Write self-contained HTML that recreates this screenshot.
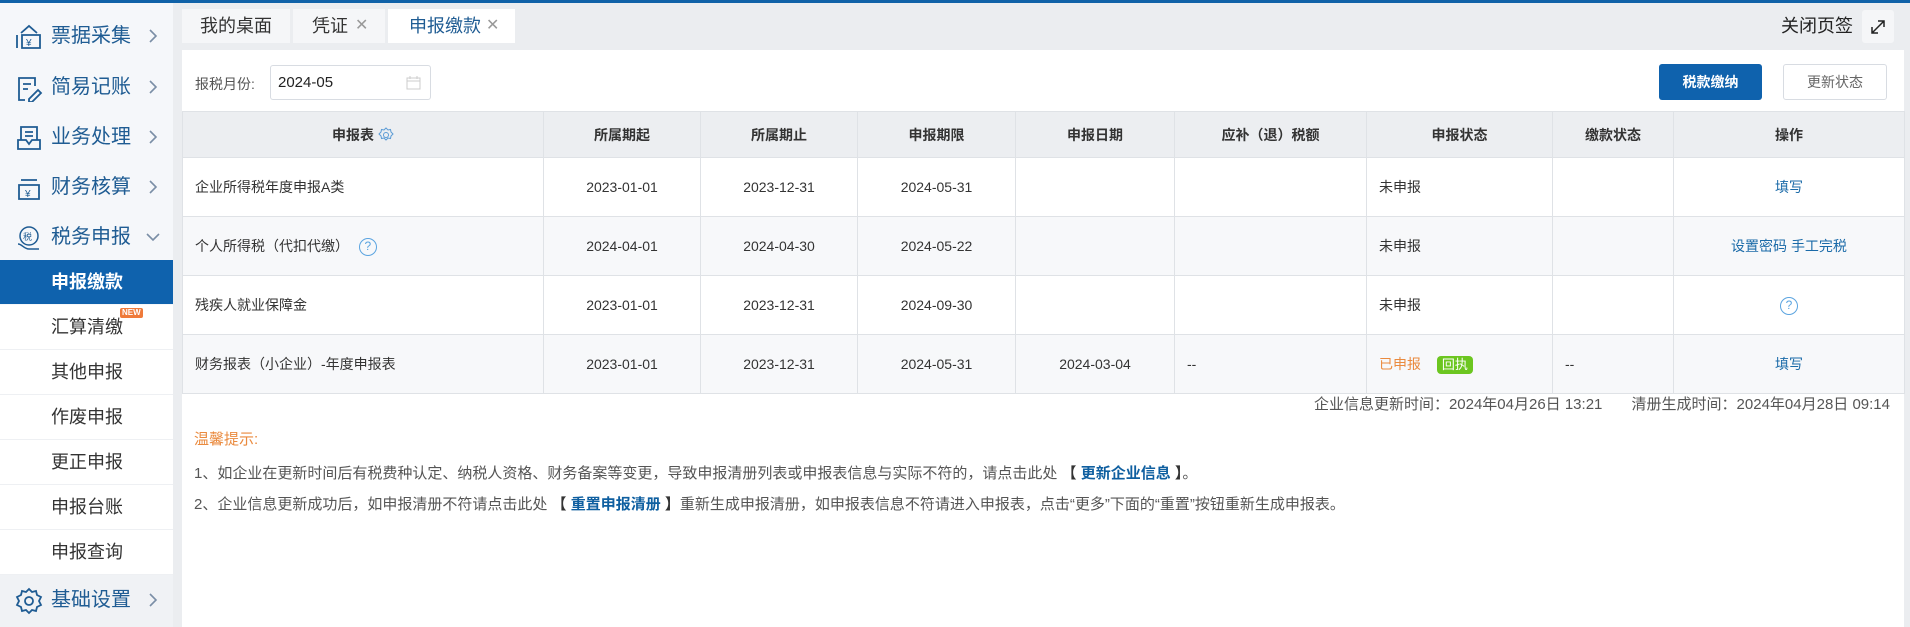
<!DOCTYPE html>
<html><head><meta charset="utf-8">
<style>
*{margin:0;padding:0;box-sizing:border-box}
body{width:1910px;height:627px;overflow:hidden;background:#ebedf0;font-family:"Liberation Sans","Noto Sans CJK SC",sans-serif;position:relative;color:#333}
.topbar{position:absolute;left:0;top:0;width:1910px;height:3px;background:#1062a8}
.side{position:absolute;left:0;top:3px;width:173px;height:624px;background:#f5f7fa}
.mi{position:absolute;left:0;width:173px;height:50px;color:#1f5c93;font-size:20px;line-height:50px}
.mi .t{position:absolute;left:51px}
.mi svg.ic{position:absolute;left:15px;top:12px}
.mi .ch{position:absolute;left:148px;top:17px}
.sub{position:absolute;left:0;width:173px;height:45px;background:#fff;font-size:18px;line-height:45px;color:#333;border-bottom:1px solid #eef0f3}
.sub .t{position:absolute;left:51px}
.sub.act{background:#0f62ad;color:#fff;font-weight:bold;border:none}
.tab{position:absolute;top:9px;height:34px;background:#f5f6f8;font-size:18px;line-height:34px;color:#333}
.panel{position:absolute;left:182px;top:50px;width:1722px;height:577px;background:#fff}
table{position:absolute;left:182px;top:111px;border-collapse:collapse;font-size:14px}
td,th{border:1px solid #dfe2e6;height:59px;text-align:center;color:#333;font-weight:normal}
th{height:46px;background:#eceef1;font-weight:bold;color:#333}
tr.g td{background:#f7f8fa}
td.l{text-align:left;padding-left:12px}
a{color:#1a6aa8;text-decoration:none}
.note{position:absolute;left:194px;font-size:15px;color:#555;white-space:nowrap}
</style></head><body>
<div class="topbar"></div>
<div class="side">
 <div class="mi" style="top:8px"><svg class="ic" width="28" height="28" viewBox="0 0 28 28" fill="none" stroke="#1f5c93" stroke-width="1.8"><path d="M2 12v13M6 10l8-7 8 7M7 12h18v13H7z"/><text x="11" y="23" font-size="10" fill="#1f5c93" stroke="none">¥</text></svg><span class="t">票据采集</span><svg class="ch" width="10" height="16" viewBox="0 0 10 16"><path d="M2 2l6 6-6 6" stroke="#7a8ea6" stroke-width="1.6" fill="none"/></svg></div>
 <div class="mi" style="top:59px"><svg class="ic" width="28" height="28" viewBox="0 0 28 28" fill="none" stroke="#1f5c93" stroke-width="1.8"><path d="M20 12V4H4v22h6M8 10h8M8 15h5M14 25l9-9 3 3-9 9h-3z"/></svg><span class="t">简易记账</span><svg class="ch" width="10" height="16" viewBox="0 0 10 16"><path d="M2 2l6 6-6 6" stroke="#7a8ea6" stroke-width="1.6" fill="none"/></svg></div>
 <div class="mi" style="top:109px"><svg class="ic" width="28" height="28" viewBox="0 0 28 28" fill="none" stroke="#1f5c93" stroke-width="1.8"><path d="M6 16V3h16v13M10 8h8M10 12h8M3 16h8l3 4 3-4h8v9H3z"/></svg><span class="t">业务处理</span><svg class="ch" width="10" height="16" viewBox="0 0 10 16"><path d="M2 2l6 6-6 6" stroke="#7a8ea6" stroke-width="1.6" fill="none"/></svg></div>
 <div class="mi" style="top:159px"><svg class="ic" width="28" height="28" viewBox="0 0 28 28" fill="none" stroke="#1f5c93" stroke-width="1.8"><path d="M6 6h16M4 11h20v14H4z"/><text x="10" y="23" font-size="10" fill="#1f5c93" stroke="none">¥</text></svg><span class="t">财务核算</span><svg class="ch" width="10" height="16" viewBox="0 0 10 16"><path d="M2 2l6 6-6 6" stroke="#7a8ea6" stroke-width="1.6" fill="none"/></svg></div>
 <div class="mi" style="top:209px"><svg class="ic" width="28" height="28" viewBox="0 0 28 28" fill="none" stroke="#1f5c93" stroke-width="1.5"><circle cx="14" cy="12" r="9"/><path d="M3 20c4 0 6 5 11 5h10"/><text x="8" y="16" font-size="9" fill="#1f5c93" stroke="none">税</text></svg><span class="t">税务申报</span><svg class="ch" width="16" height="12" viewBox="0 0 16 12" style="left:145px;top:20px"><path d="M2 2l6 6 6-6" stroke="#7a8ea6" stroke-width="1.6" fill="none"/></svg></div>
 <div class="sub act" style="top:257px;height:44px"><span class="t">申报缴款</span></div>
 <div class="sub" style="top:302px"><span class="t">汇算清缴</span><span style="position:absolute;left:120px;top:3px;background:#ef7a3a;color:#fff;font-size:8px;line-height:10px;padding:0 2px;border-radius:2px;font-weight:bold">NEW</span></div>
 <div class="sub" style="top:347px"><span class="t">其他申报</span></div>
 <div class="sub" style="top:392px"><span class="t">作废申报</span></div>
 <div class="sub" style="top:437px"><span class="t">更正申报</span></div>
 <div class="sub" style="top:482px"><span class="t">申报台账</span></div>
 <div class="sub" style="top:527px"><span class="t">申报查询</span></div>
 <div class="mi" style="top:572px;height:52px;background:#f0f2f5"><svg class="ic" width="28" height="28" viewBox="0 0 28 28" fill="none" stroke="#1f5c93" stroke-width="1.8"><circle cx="14" cy="14" r="4"/><path d="M14 2l3 3 4-1 1 4 4 2-2 4 2 4-4 2-1 4-4-1-3 3-3-3-4 1-1-4-4-2 2-4-2-4 4-2 1-4 4 1z"/></svg><span class="t">基础设置</span><svg class="ch" width="10" height="16" viewBox="0 0 10 16"><path d="M2 2l6 6-6 6" stroke="#7a8ea6" stroke-width="1.6" fill="none"/></svg></div>
</div>
<div class="tab" style="left:182px;width:108px"><span style="position:absolute;left:18px">我的桌面</span></div>
<div class="tab" style="left:293px;width:92px"><span style="position:absolute;left:19px">凭证</span><span style="position:absolute;left:62px;color:#999;font-size:16px">✕</span></div>
<div class="tab" style="left:388px;width:127px;background:#fff;color:#1f5c93"><span style="position:absolute;left:21px">申报缴款</span><span style="position:absolute;left:98px;color:#999;font-size:16px">✕</span></div>
<div style="position:absolute;left:1781px;top:9px;font-size:18px;line-height:34px;color:#222">关闭页签</div>
<div style="position:absolute;left:1862px;top:10px;width:32px;height:33px;background:#f5f6f8;border-radius:3px"><svg width="32" height="33" viewBox="0 0 32 33"><path d="M10 23l12-12M16 11h6v6M10 17v6h6" stroke="#222" stroke-width="1.5" fill="none"/></svg></div>
<div class="panel"></div>
<div style="position:absolute;left:195px;top:74px;font-size:14px;color:#555">报税月份:</div>
<div style="position:absolute;left:270px;top:65px;width:161px;height:35px;border:1px solid #d8dce2;border-radius:3px;font-size:15px;line-height:33px;padding-left:7px;color:#222">2024-05<svg style="position:absolute;right:9px;top:9px" width="15" height="15" viewBox="0 0 15 15"><path d="M1 3h13v11H1zM1 6h13M4 1v3M11 1v3" stroke="#ccc" fill="none"/></svg></div>
<div style="position:absolute;left:1659px;top:64px;width:103px;height:36px;background:#0f62ad;border-radius:3px;color:#fff;font-size:14px;font-weight:bold;line-height:36px;text-align:center">税款缴纳</div>
<div style="position:absolute;left:1783px;top:64px;width:104px;height:36px;border:1px solid #d8dce2;border-radius:3px;color:#666;font-size:14px;line-height:34px;text-align:center">更新状态</div>
<table>
<tr><th style="width:361px">申报表 <svg width="16" height="16" viewBox="0 0 16 16" style="vertical-align:-3px"><circle cx="8" cy="8" r="2.5" stroke="#5b9bd5" fill="none"/><path d="M8 1l2 2 2.5-.5.5 2.5 2 2-2 2-.5 2.5-2.5-.5-2 2-2-2-2.5.5-.5-2.5-2-2 2-2 .5-2.5 2.5.5z" stroke="#5b9bd5" fill="none"/></svg></th><th style="width:157px">所属期起</th><th style="width:157px">所属期止</th><th style="width:158px">申报期限</th><th style="width:159px">申报日期</th><th style="width:192px">应补（退）税额</th><th style="width:186px">申报状态</th><th style="width:121px">缴款状态</th><th style="width:231px">操作</th></tr>
<tr><td class="l">企业所得税年度申报A类</td><td>2023-01-01</td><td>2023-12-31</td><td>2024-05-31</td><td></td><td></td><td class="l">未申报</td><td></td><td><a>填写</a></td></tr>
<tr class="g"><td class="l">个人所得税（代扣代缴） <span style="display:inline-block;width:18px;height:18px;border:1.5px solid #5ba4e0;border-radius:50%;color:#5ba4e0;font-size:12px;line-height:15px;text-align:center;margin-left:6px;vertical-align:middle">?</span></td><td>2024-04-01</td><td>2024-04-30</td><td>2024-05-22</td><td></td><td></td><td class="l">未申报</td><td></td><td><a>设置密码</a> <a>手工完税</a></td></tr>
<tr><td class="l">残疾人就业保障金</td><td>2023-01-01</td><td>2023-12-31</td><td>2024-09-30</td><td></td><td></td><td class="l">未申报</td><td></td><td><span style="display:inline-block;width:18px;height:18px;border:1.5px solid #5ba4e0;border-radius:50%;color:#5ba4e0;font-size:12px;line-height:15px;text-align:center">?</span></td></tr>
<tr class="g"><td class="l">财务报表（小企业）-年度申报表</td><td>2023-01-01</td><td>2023-12-31</td><td>2024-05-31</td><td>2024-03-04</td><td class="l">--</td><td class="l"><span style="color:#ea8a3e">已申报</span> <span style="display:inline-block;margin-left:12px;background:#6cc620;color:#fff;font-size:13px;line-height:18px;padding:0 5px;border-radius:4px;position:relative">回执</span></td><td class="l">--</td><td><a>填写</a></td></tr>
</table>
<div style="position:absolute;right:20px;top:393px;font-size:15px;color:#555;white-space:nowrap">企业信息更新时间：2024年04月26日 13:21 &nbsp;&nbsp;&nbsp;&nbsp;&nbsp; 清册生成时间：2024年04月28日 09:14</div>
<div class="note" style="top:428px;color:#ea8a3e">温馨提示:</div>
<div class="note" style="top:462px">1、如企业在更新时间后有税费种认定、纳税人资格、财务备案等变更，导致申报清册列表或申报表信息与实际不符的，请点击此处 <b style="color:#333">【</b> <b style="color:#0f5fa0">更新企业信息</b> <b style="color:#333">】</b>。</div>
<div class="note" style="top:493px">2、企业信息更新成功后，如申报清册不符请点击此处 <b style="color:#333">【</b> <b style="color:#0f5fa0">重置申报清册</b> <b style="color:#333">】</b>重新生成申报清册，如申报表信息不符请进入申报表，点击“更多”下面的“重置”按钮重新生成申报表。</div>
</body></html>
